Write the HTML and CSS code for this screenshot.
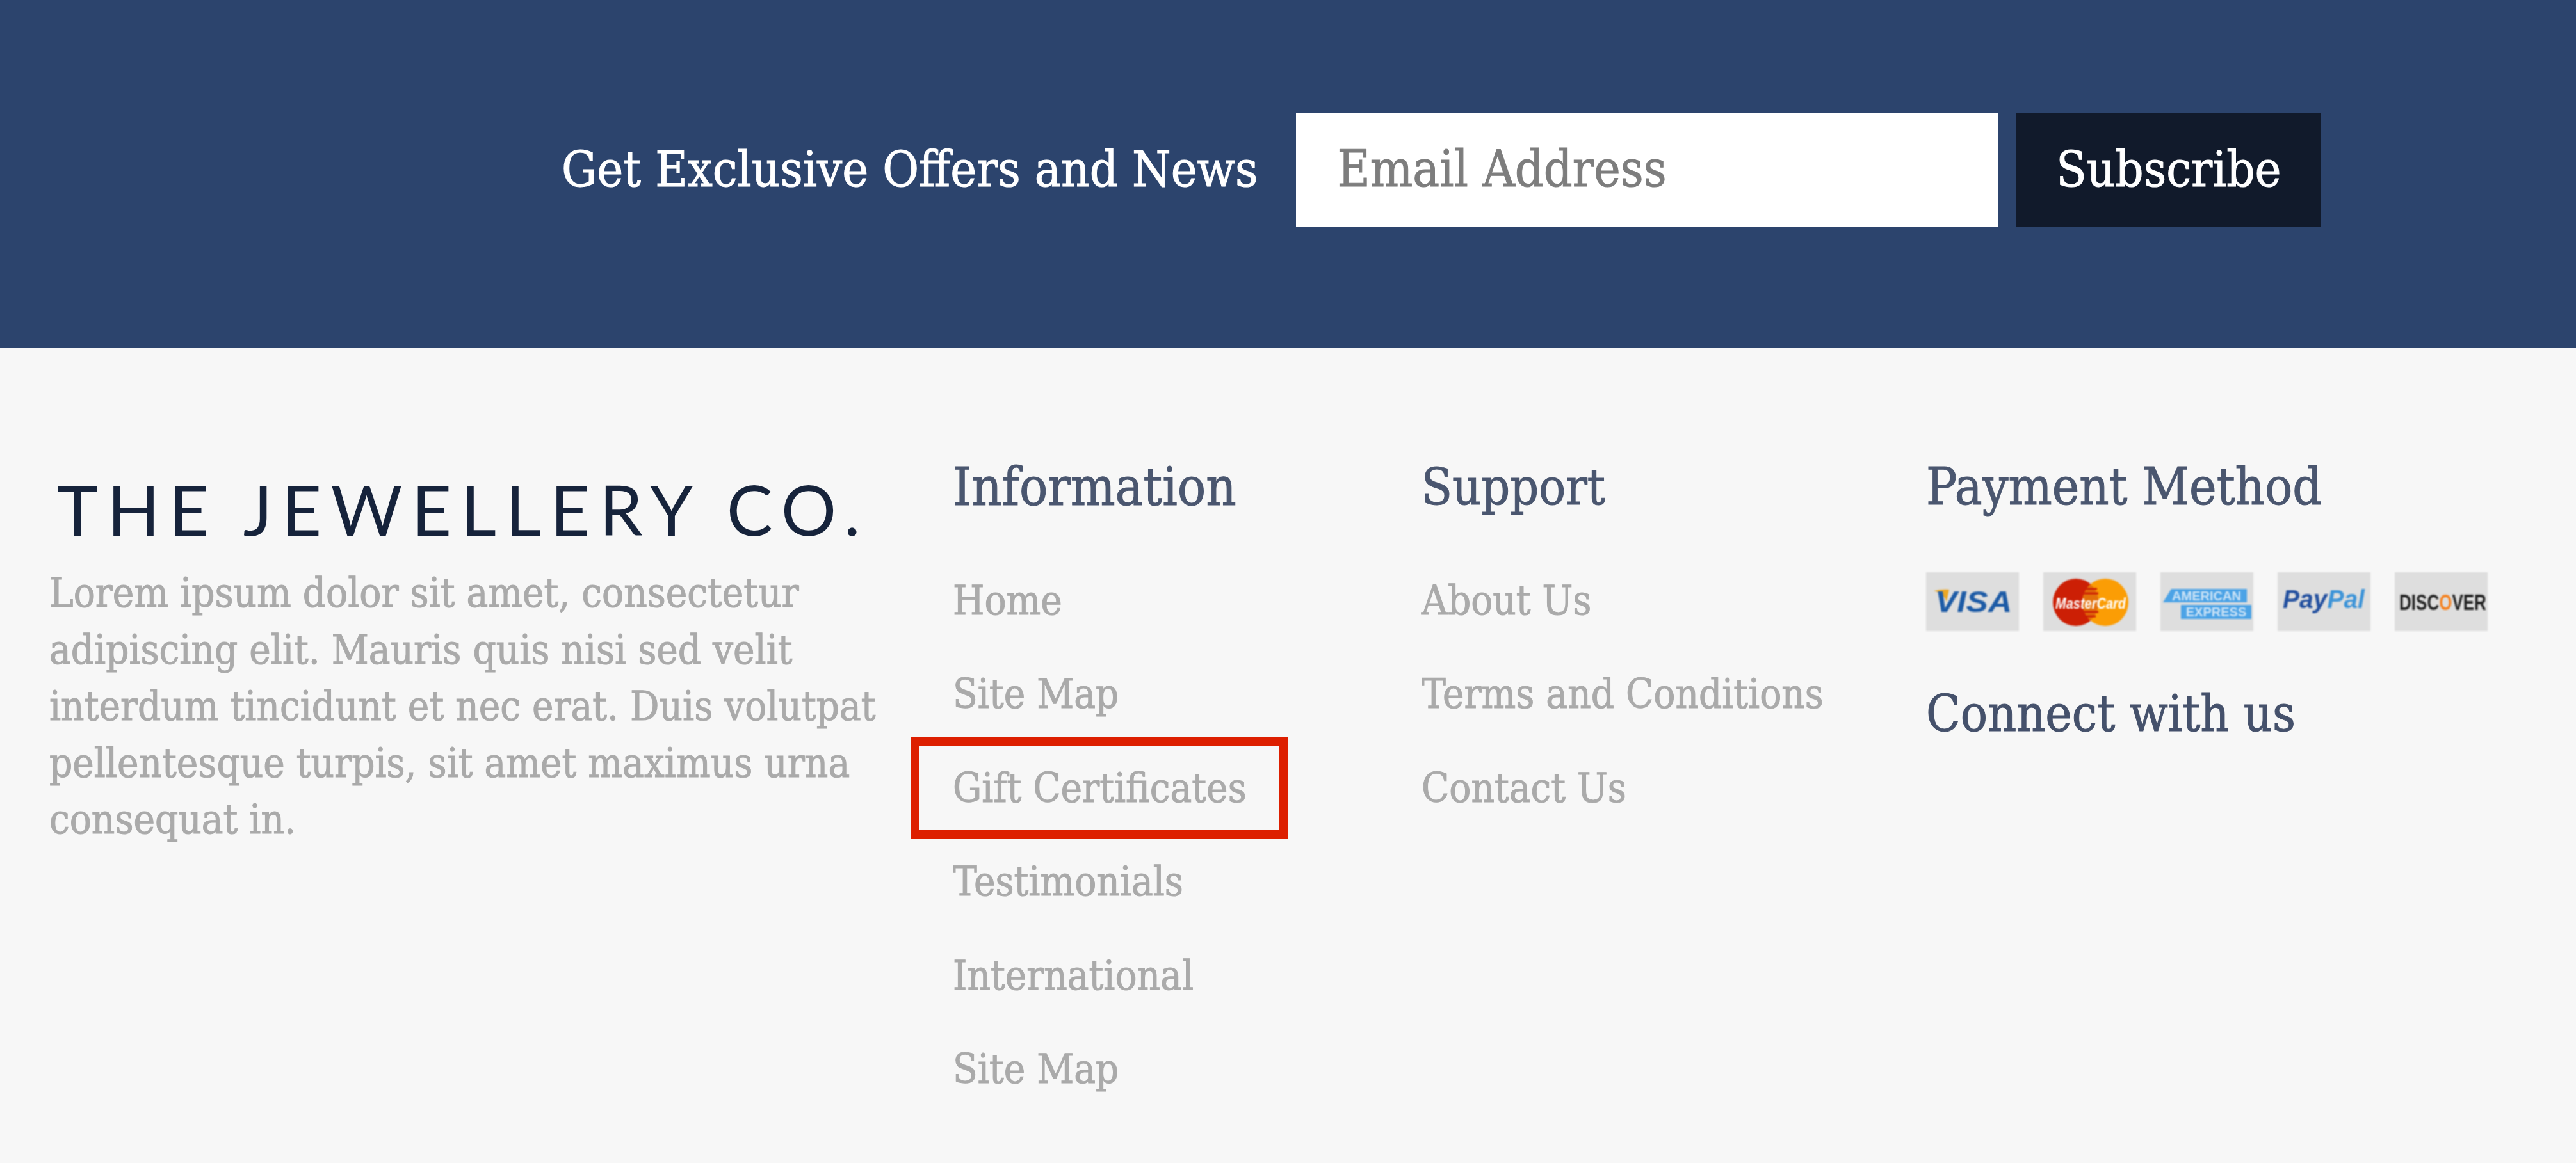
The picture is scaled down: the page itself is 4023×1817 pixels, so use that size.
FILE: index.html
```html
<!DOCTYPE html>
<html lang="en">
<head>
<meta charset="utf-8">
<title>The Jewellery Co.</title>
<link rel="stylesheet" href="styles.css">
</head>
<body>
<section class="newsletter">
  <h2 class="newsletter-title">Get Exclusive Offers and News</h2>
  <form class="newsletter-form">
    <div class="email-field">Email Address</div>
    <div class="subscribe">Subscribe</div>
  </form>
</section>
<footer class="footer">
  <div class="about">
    <div class="logo">THE JEWELLERY CO.</div>
    <p class="about-text">Lorem ipsum dolor sit amet, consectetur<br>adipiscing elit. Mauris quis nisi sed velit<br>interdum tincidunt et nec erat. Duis volutpat<br>pellentesque turpis, sit amet maximus urna<br>consequat in.</p>
  </div>
  <div class="col col-info">
    <h3 class="col-title">Information</h3>
    <ul class="links">
      <li>Home</li>
      <li>Site Map</li>
      <li class="marked">Gift Certificates<span class="marker"></span></li>
      <li>Testimonials</li>
      <li>International</li>
      <li>Site Map</li>
    </ul>
  </div>
  <div class="col col-support">
    <h3 class="col-title">Support</h3>
    <ul class="links">
      <li>About Us</li>
      <li>Terms and Conditions</li>
      <li>Contact Us</li>
    </ul>
  </div>
  <div class="col col-pay">
    <h3 class="col-title">Payment Method</h3>
    <div class="cards">
      <svg class="card" viewBox="0 0 145 92"><path d="M12 29 C22 31 29 37 32 46 L36 27 Q24 26 12 29 Z" fill="#eda824"/><text transform="translate(74 62) scale(1.12 1)" class="t-visa">VISA</text></svg>
      <svg class="card" viewBox="0 0 145 92"><ellipse cx="51" cy="47" rx="36" ry="37" fill="#cc1f05"/><ellipse cx="97" cy="47" rx="36" ry="37" fill="#fb9d05"/><path d="M74 19 A36 37 0 0 1 74 75 A36 37 0 0 1 74 19Z" fill="#e2700a"/><path d="M64 26 H84 M62 33 H86 M62 62 H86 M66 69 H82" stroke="#cc1f05" stroke-width="3"/><text transform="translate(74 57) scale(1 1.2)" class="t-mc">MasterCard</text></svg>
      <svg class="card" viewBox="0 0 145 92"><path d="M4 47 L17 26 H135 V47 Z" fill="#4ca3e6"/><path d="M32 51 H142 V73 H32 Z" fill="#4ca3e6"/><text x="72" y="44" class="t-amex">AMERICAN</text><text x="87" y="69" class="t-amex">EXPRESS</text></svg>
      <svg class="card" viewBox="0 0 145 92"><text transform="translate(72 56) scale(1 1.05)" class="t-pp"><tspan fill="#23509f">Pay</tspan><tspan fill="#3d94d8">Pal</tspan></text></svg>
      <svg class="card" viewBox="0 0 145 92"><text transform="translate(75 59) scale(1 1.38)" class="t-dc">DISC<tspan fill="#f58220">O</tspan>VER</text></svg>
    </div>
    <h3 class="connect">Connect with us</h3>
  </div>
</footer>
</body>
</html>
```
FILE: styles.css
```css
html, body { margin: 0; padding: 0; }
body {
  width: 4023px;
  height: 1817px;
  overflow: hidden;
  background: #f7f7f7;
  font-family: "DejaVu Serif Condensed", "DejaVu Serif", serif;
  font-stretch: condensed;
  -webkit-text-stroke: 1px currentColor;
}
.newsletter {
  height: 544px;
  box-sizing: border-box;
  background: #2c446d;
  display: flex;
  align-items: flex-start;
  padding: 177px 398px 0 877px;
  gap: 60px;
}
.newsletter-title {
  margin: 0;
  color: #fff;
  font-weight: 400;
  font-size: 77px;
  line-height: 175px;
  white-space: nowrap;
}
.newsletter-form { display: flex; gap: 28px; }
.email-field {
  width: 1096px;
  height: 177px;
  box-sizing: border-box;
  background: #fff;
  padding-left: 64px;
  color: #7d7d7d;
  font-size: 78px;
  line-height: 175px;
}
.subscribe {
  width: 477px;
  height: 177px;
  background: #111a2b;
  color: #fff;
  font-size: 77px;
  line-height: 175px;
  text-align: center;
}
.footer {
  display: grid;
  grid-template-columns: 1411px 732px 788px 1fr;
  padding: 0 0 0 77px;
}
.logo {
  margin: 196px 0 0 12px;
  color: #16233b;
  font-family: "Lato", sans-serif;
  font-weight: 400;
  font-size: 108px;
  line-height: 110px;
  letter-spacing: 14.4px;
  white-space: nowrap;
  font-stretch: normal;
  -webkit-text-stroke: 0;
}
.about-text {
  margin: 33px 0 0;
  color: #aaa;
  font-size: 63px;
  line-height: 88.5px;
  white-space: nowrap;
}
.col { padding-top: 172px; }
.col-title, .connect {
  margin: 0;
  color: #4a566f;
  font-weight: 400;
  font-size: 80px;
  line-height: 90px;
  white-space: nowrap;
}
.col-info .col-title { font-size: 82px; }
.col-support .col-title { font-size: 78px; }
.links { list-style: none; margin: 60px 0 0; padding: 0; }
.links li {
  color: #aaa;
  font-size: 63px;
  line-height: 146.4px;
  white-space: nowrap;
}
.marked { position: relative; }
.marker {
  position: absolute;
  left: -66px;
  top: -7px;
  width: 589px;
  height: 159px;
  box-sizing: border-box;
  border: 14px solid #dd1f00;
}
.cards { display: flex; gap: 38px; margin-top: 88px; }
.card { width: 145px; height: 92px; background: #dedede; flex: none; filter: blur(0.8px); -webkit-text-stroke: 0; }
.card text { text-anchor: middle; font-family: "Liberation Sans", sans-serif; font-stretch: normal; }
.t-visa { font-size: 46px; font-weight: 700; font-style: italic; fill: #1d5ba6; }
.t-mc { font-size: 20px; font-weight: 700; font-style: italic; fill: #fff; }
.t-amex { font-size: 20px; font-weight: 700; fill: #cfe5f7; }
.t-pp { font-size: 39px; font-weight: 700; font-style: italic; }
.t-dc { font-size: 26px; font-weight: 700; fill: #222; }
.connect { margin-top: 84px; font-size: 78px; color: #45516b; }
```
